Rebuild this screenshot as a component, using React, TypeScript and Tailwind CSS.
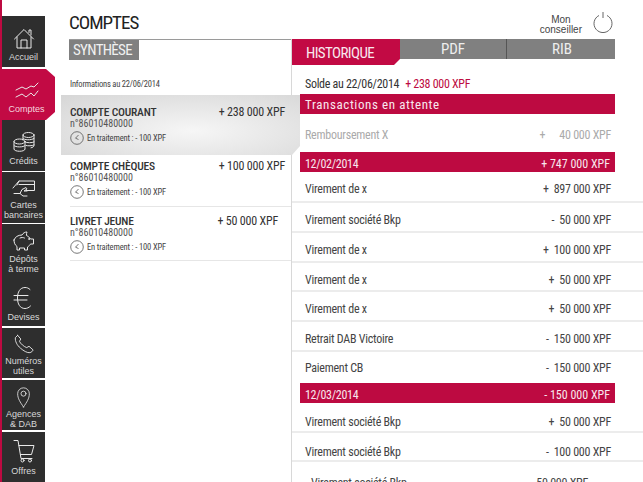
import type { ReactNode } from 'react'

const condensed = "font-['Roboto_Condensed',sans-serif]"

interface NavItem { label: string[]; tile: string; icon: ReactNode; active?: boolean }

const stroke = { fill: 'none', stroke: 'currentColor', strokeWidth: 1, strokeLinecap: 'round', strokeLinejoin: 'round' } as const

const navItems: NavItem[] = [
  {
    label: ['Accueil'],
    tile: 'h-[51px] pt-2 pb-[5px]',
    icon: (
      <svg width="22" height="21" viewBox="0 0 22 21" {...stroke}>
        <path d="M1.5 11 11 1.500l9.500 9.500M4 9v11h14V9M8 20v-8h6v8M16 4.500V2h2v5" />
      </svg>
    ),
  },
  {
    label: ['Comptes'],
    tile: 'h-[51px] mt-0.5 pt-2 pb-1.5',
    active: true,
    icon: (
      <svg width="24" height="18" viewBox="0 0 24 18" {...stroke}>
        <path d="M1 8 7 5l4 2 5-3 3 1 4-4M1 15l6-3 4 3 5-4 3 3 4-5" />
      </svg>
    ),
  },
  {
    label: ['Crédits'],
    tile: 'h-[51px] pt-2 pb-[5px]',
    icon: (
      <svg width="24" height="22" viewBox="0 0 24 22" {...stroke}>
        <ellipse cx="16.500" cy="4" rx="5.500" ry="2.500" />
        <path d="M11 4v5M22 4v10.500c0 1.200-1.500 2-3 2.300M11 7.500c1 1.500 8 2 11 0M13 11c2 1 7 1 9 0M14 14.500c2 .5 6 .5 8-.5" />
        <ellipse cx="7.500" cy="10.500" rx="5.500" ry="2.500" />
        <path d="M2 10.500V18c0 3 11 3 11 0v-7.500M2 14.500c1 2 10 2 11 0" />
      </svg>
    ),
  },
  {
    label: ['Cartes', 'bancaires'],
    tile: 'h-[51px] mt-px pt-1 pb-[3px]',
    icon: (
      <svg width="24" height="18" viewBox="0 0 24 18" {...stroke}>
        <path d="M1 9 7 2h15.500v9.500H14M7 2 5 6M7 5.500h15.500M8 14.500l2-4 4-2 1 1.500-3 2h3M2 14.500h6l3 2.500h4" />
      </svg>
    ),
  },
  {
    label: ['Dépôts', 'à terme'],
    tile: 'h-[51px] mt-px pt-1 pb-px',
    icon: (
      <svg width="24" height="20" viewBox="0 0 24 20" {...stroke}>
        <path d="M2 9c1-3 4-5 8-5 1-2 3-3 5-3-.5 1-.5 2-.5 3.500 2 1 3 2 4 3.500h3v5h-3c-.5 1-1.500 2-3 3v3h-3v-2h-5v2H5v-3.500C3 14 2 12 2 9Z" />
        <path d="M8 7c1.500-.7 3-.7 4.500 0" />
        <circle cx="17" cy="8" r=".5" />
      </svg>
    ),
  },
  {
    label: ['Devises'],
    tile: 'h-[51px] pt-2 pb-1',
    icon: (
      <svg width="22" height="24" viewBox="0 0 22 24" {...stroke}>
        <path d="M17 3.500C15.500 2 13.800 1.500 12 1.500c-5 0-7.500 4.500-7.500 10.500S7 22.500 12 22.500c2 0 3.800-.8 5.500-2.500M1 9.500h14M1 14h13" />
      </svg>
    ),
  },
  {
    label: ['Numéros', 'utiles'],
    tile: 'h-[50px] mt-0.5 pt-1 pb-0.5',
    icon: (
      <svg width="20" height="20" viewBox="0 0 22 22" {...stroke}>
        <path d="M4 1.500 1.500 4c-.5 4 2 8.500 5.500 11.500s7.500 5.500 10.500 5c1.500-.3 3-1.500 3.500-3l-4.500-4-2.500 1.500C11 14 7 10.500 6 8l1.500-2.500L4 1.500Z" />
      </svg>
    ),
  },
  {
    label: ['Agences', '& DAB'],
    tile: 'h-[50px] mt-0.5 pt-1 pb-px',
    icon: (
      <svg width="15" height="22" viewBox="0 0 18 26" {...stroke}>
        <path d="M9 25C5 19 2 15 2 9a7 7 0 0 1 14 0c0 6-3 10-7 16Z" />
        <circle cx="9" cy="9" r="3" />
      </svg>
    ),
  },
  {
    label: ['Offres'],
    tile: 'h-[50px] mt-0.5 pt-1 pb-1.5',
    icon: (
      <svg width="22" height="24" viewBox="0 0 22 24" {...stroke}>
        <path d="M1 1.500h4l3 18h11M6 6.500h15l-2.500 9H7.500" />
        <circle cx="9.500" cy="21.500" r="1.500" />
        <circle cx="17" cy="21.500" r="1.500" />
      </svg>
    ),
  },
]

function Sidebar() {
  return (
    <nav className="flex w-[46px] shrink-0 flex-col border-l-2 border-[#bd0a41] bg-white pt-4">
      {navItems.map((item) => (
        <div
          key={item.label[0]}
          className={`flex shrink-0 flex-col items-center font-['Liberation_Sans',sans-serif] text-[9px] leading-[10px] ${item.tile} ${
            item.active
              ? 'relative z-20 -ml-0.5 w-[55px] bg-[#c20a44] pl-0.5 pr-1 text-[#f5d5df] [clip-path:polygon(0_0,46px_0,55px_8px,55px_43px,46px_51px,0_51px)]'
              : 'w-[43px] bg-[#2e2e2e] text-[#d8d8d8]'
          }`}
        >
          <div className="flex flex-1 items-center justify-center text-[#e8e8e8]">{item.icon}</div>
          <div className="text-center">
            {item.label.map((line) => (
              <div key={line}>{line}</div>
            ))}
          </div>
        </div>
      ))}
    </nav>
  )
}

interface Account { name: string; amount: string; row: string; amountPad?: string }

const accounts: Account[] = [
  {
    name: 'COMPTE COURANT',
    amount: '+ 238 000 XPF',
    row: 'relative z-10 -mr-[9px] h-[60px] bg-[radial-gradient(ellipse_at_55%_60%,#f6f6f6,#d6d6d6)] pl-[9px] pr-[15px] pt-[10px] [clip-path:polygon(0_0,100%_0,100%_calc(100%-9px),calc(100%-8px)_100%,0_100%)]',
  },
  {
    name: 'COMPTE CHÈQUES',
    amount: '+ 100 000 XPF',
    row: 'ml-[9px] h-[52px] border-b border-[#e6e6e6] pr-[6px] pt-[4px]',
  },
  {
    name: 'LIVRET JEUNE',
    amount: '+ 50 000 XPF',
    row: 'ml-[9px] h-[54px] border-b border-[#e6e6e6] pr-[6px] pt-[7px]',
    amountPad: 'pr-[7px]',
  },
]

function AccountRow({ account }: { account: Account }) {
  return (
    <div className={account.row}>
      <div className="flex items-center justify-between leading-[14px] text-[#333]">
        <span className="text-[11.5px] font-medium tracking-[-0.2px]">{account.name}</span>
        <span className={`text-[12px] tracking-[-0.2px] ${account.amountPad ?? ''}`}>{account.amount}</span>
      </div>
      <div className="text-[10px] leading-[10px] text-[#555]">n°86010480000</div>
      <div className="mt-0.5 flex h-3.5 items-center gap-[3px] text-[8.5px] tracking-[-0.15px] text-[#444]">
        <svg width="14" height="14" viewBox="0 0 14 14" fill="none" stroke="#555" strokeWidth="0.8">
          <circle cx="7" cy="7" r="6.3" />
          <path d="M8.5 4 5.500 7.200l3 1.300" />
        </svg>
        En traitement : - 100 XPF
      </div>
    </div>
  )
}

function Summary() {
  return (
    <section className="w-[230px] shrink-0">
      <div className="ml-2 h-[21px] border-t border-[#9a9a9a]">
        <div className="flex h-5 w-[70px] items-center bg-[#808080] pl-1 text-[15px] tracking-[-0.7px] text-[#f0f0f0]">SYNTHÈSE</div>
      </div>
      <p className="ml-[9px] pt-[18px] pb-[5px] text-[8.5px] leading-3 tracking-[-0.2px] text-[#444]">Informations au 22/06/2014</p>
      {accounts.map((a) => (
        <AccountRow key={a.name} account={a} />
      ))}
    </section>
  )
}

interface Tx { label: string; sign: string; amount: string; row: string; gap?: string }

function TxRow({ tx }: { tx: Tx }) {
  return (
    <div className={`flex shrink-0 items-center justify-between pl-[13px] pr-8 text-[12px] tracking-[-0.25px] ${tx.row}`}>
      <span>{tx.label}</span>
      <span className={`flex items-center ${tx.gap ?? 'gap-[5px]'}`}>
        <span>{tx.sign}</span>
        <span>{tx.amount}</span>
      </span>
    </div>
  )
}

function RedBar({ left, right, labelClass, pad }: { left: string; right?: string; labelClass: string; pad: string }) {
  return (
    <div className={`ml-2 mr-7 flex h-5 shrink-0 items-center justify-between bg-[#bd0a41] px-[5px] text-[#f8e8ee] ${pad}`}>
      <span className={labelClass}>{left}</span>
      {right && <span className="text-[12px]">{right}</span>}
    </div>
  )
}

const ruled = 'border-b-2 border-[#ececec] text-[#444]'
const dateLabel = 'text-[12px] tracking-[-0.3px]'

const firstBlock: Tx[] = [
  { label: 'Virement de x', sign: '+', amount: '897 000 XPF', row: `h-[31px] pt-1 ${ruled}` },
  { label: 'Virement société Bkp', sign: '-', amount: '50 000 XPF', row: `h-[30px] pt-1.5 ${ruled}` },
  { label: 'Virement de x', sign: '+', amount: '100 000 XPF', row: `h-[30px] pt-1.5 ${ruled}` },
  { label: 'Virement de x', sign: '+', amount: '50 000 XPF', row: `h-[29px] pt-1.5 ${ruled}` },
  { label: 'Virement de x', sign: '+', amount: '50 000 XPF', row: `h-[30px] pt-1.5 ${ruled}` },
  { label: 'Retrait DAB Victoire', sign: '-', amount: '150 000 XPF', row: `h-[30px] pt-1.5 ${ruled}` },
]

function History() {
  return (
    <section className="flex flex-1 flex-col overflow-hidden border-l border-[#d8d8d8]">
      <div className="flex h-[26px] shrink-0">
        <div className="flex h-[26px] w-[108px] items-center bg-[#c20a44] pl-[14px] pt-0.5 text-[15px] tracking-[-0.6px] text-[#f8e8ee] [clip-path:polygon(0_0,100%_0,100%_20px,calc(100%-6px)_100%,0_100%)]">
          HISTORIQUE
        </div>
        <div className="flex h-5 w-[215px] items-center bg-[#808080] text-[15px] text-[#eee]">
          <span className="flex h-full w-[107px] items-center justify-center border-r border-[#555] pt-px">PDF</span>
          <span className="flex-1 pl-0.5 pt-px text-center">RIB</span>
        </div>
      </div>
      <div className="flex h-[29px] shrink-0 items-center gap-[6px] pl-[13px] pt-2 text-[12px] tracking-[-0.3px] text-[#333]">
        Solde au 22/06/2014
        <span className="text-[#bd0a41]">+ 238 000 XPF</span>
      </div>
      <RedBar left="Transactions en attente" labelClass="text-[13px] tracking-[0.6px]" pad="pt-0.5" />
      <TxRow tx={{ label: 'Remboursement X', sign: '+', amount: '40 000 XPF', gap: 'gap-[14px]', row: 'h-[38px] pt-1 text-[#aaa]' }} />
      <RedBar left="12/02/2014" right="+ 747 000 XPF" labelClass={dateLabel} pad="pt-1" />
      {firstBlock.map((tx, i) => (
        <TxRow key={i} tx={tx} />
      ))}
      <TxRow tx={{ label: 'Paiement CB', sign: '-', amount: '150 000 XPF', row: 'h-[31px] text-[#444]' }} />
      <RedBar left="12/03/2014" right="- 150 000 XPF" labelClass={dateLabel} pad="pt-1" />
      <TxRow tx={{ label: 'Virement société Bkp', sign: '+', amount: '50 000 XPF', row: `h-[30px] pt-2.5 ${ruled}` }} />
      <TxRow tx={{ label: 'Virement société Bkp', sign: '-', amount: '100 000 XPF', row: `h-[29px] pt-2.5 ${ruled}` }} />
      <div className="flex shrink-0 justify-between pl-[19px] pr-[55px] pt-3 text-[12px] tracking-[-0.25px] text-[#444]">
        <span>Virement société Bkp</span>
        <span>50 000 XPF</span>
      </div>
    </section>
  )
}

export default function App() {
  return (
    <div className={`flex h-[482px] w-[643px] overflow-hidden bg-white ${condensed}`}>
      <Sidebar />
      <main className="flex min-w-0 flex-1 flex-col pl-[15px]">
        <header className="flex h-[39px] shrink-0 items-start justify-between pl-2 pr-[30px] pt-[11px]">
          <h1 className="text-[19px] leading-6 tracking-[-1px] text-[#222]">COMPTES</h1>
          <div className="flex items-center gap-[11px] font-['Liberation_Sans',sans-serif] text-[10px] leading-[10px] text-[#444]">
            <div className="mt-1 text-center">
              <div>Mon</div>
              <div>conseiller</div>
            </div>
            <svg width="20" height="22" viewBox="0 0 20 22" fill="none" stroke="#555" strokeWidth="0.9" className="-mt-0.5">
              <path d="M6 4.500a9 9 0 1 0 8 0M10 1v6" />
            </svg>
          </div>
        </header>
        <div className="flex min-h-0 flex-1">
          <Summary />
          <History />
        </div>
      </main>
    </div>
  )
}
